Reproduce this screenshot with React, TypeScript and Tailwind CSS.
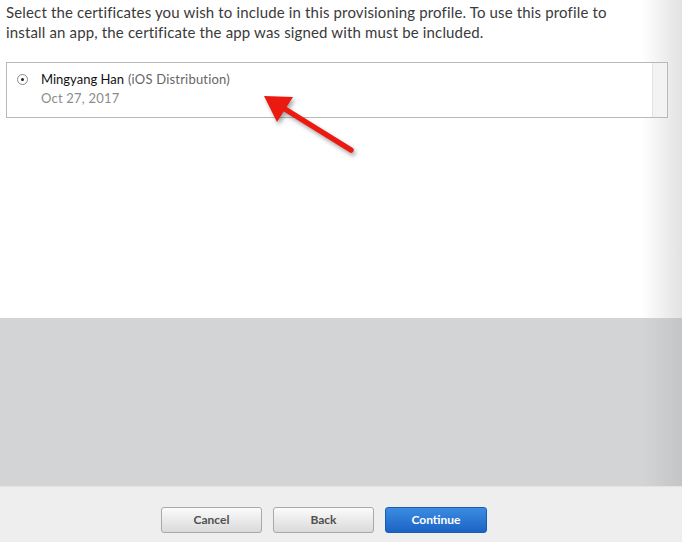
export default function App() {
  return (
    <div className="relative w-[682px] h-[542px] overflow-hidden flex flex-col font-['Lato',sans-serif]">
      {/* White content area */}
      <section className="relative h-[318px] bg-white">
        <div className="absolute inset-y-0 right-0 w-[40px] bg-gradient-to-r from-white to-[#e2e2e2]"></div>
        <div className="relative px-[6px] pt-[2px]">
          <p className="text-[15px] leading-[20px] tracking-[0.15px] text-[#3a3a3a] w-[640px]">
            Select the certificates you wish to include in this provisioning profile. To use this profile to<br />
            install an app, the certificate the app was signed with must be included.
          </p>

          <div className="mt-[20px] w-[662px] h-[56px] border border-[#b9b9b9] bg-white flex">
            <div className="flex-1 flex items-start pl-[10px] pt-[7px]">
              <div className="mt-[4px] w-[11px] h-[11px] rounded-full border border-[#8a8a8a] bg-white flex items-center justify-center shrink-0">
                <div className="w-[3px] h-[3px] rounded-full bg-[#222]"></div>
              </div>
              <div className="ml-[13px]">
                <div className="text-[13px] leading-[19px]">
                  <span className="text-[#111]">Mingyang Han</span>
                  <span className="text-[#666] text-[13px] ml-[4px] tracking-[0.2px]">(iOS Distribution)</span>
                </div>
                <div className="text-[13px] leading-[19px] tracking-[0.2px] text-[#8c8c8c]">Oct 27, 2017</div>
              </div>
            </div>
            <div className="w-[15px] bg-[#f3f3f3] border-l border-[#e3e3e3]"></div>
          </div>
        </div>
      </section>

      {/* Gray band */}
      <section className="relative h-[168px] bg-[#d3d4d6]">
        <div className="absolute inset-y-0 right-0 w-[40px] bg-gradient-to-r from-[#d3d4d6] to-[#c4c5c7]"></div>
      </section>

      {/* Footer with buttons */}
      <footer className="relative flex-1 bg-[#eeeeee] border-t border-[#e3e3e3] flex items-start pt-[20px] pl-[161px] gap-[11px]">
        <button className="w-[101px] h-[26px] rounded-[3px] border border-[#a9a9a9] bg-gradient-to-b from-[#fbfbfb] to-[#dadada] text-[12px] font-bold text-[#505050]">
          Cancel
        </button>
        <button className="w-[101px] h-[26px] rounded-[3px] border border-[#a9a9a9] bg-gradient-to-b from-[#fbfbfb] to-[#dadada] text-[12px] font-bold text-[#505050]">
          Back
        </button>
        <button className="w-[102px] h-[26px] rounded-[3px] border border-[#1b5cb3] bg-gradient-to-b from-[#3c8ce2] to-[#1b63c4] text-[12px] font-bold text-white">
          Continue
        </button>
      </footer>

      {/* Red annotation arrow */}
      <svg
        className="absolute left-0 top-0 pointer-events-none drop-shadow-[2px_3px_2px_rgba(0,0,0,0.35)]"
        width="682"
        height="542"
        viewBox="0 0 682 542"
      >
        <line x1="351" y1="150" x2="280" y2="106" stroke="#ea1a10" strokeWidth="5.5" strokeLinecap="round" />
        <polygon points="264,96 293,97 277,122" fill="#ea1a10" />
      </svg>
    </div>
  );
}
